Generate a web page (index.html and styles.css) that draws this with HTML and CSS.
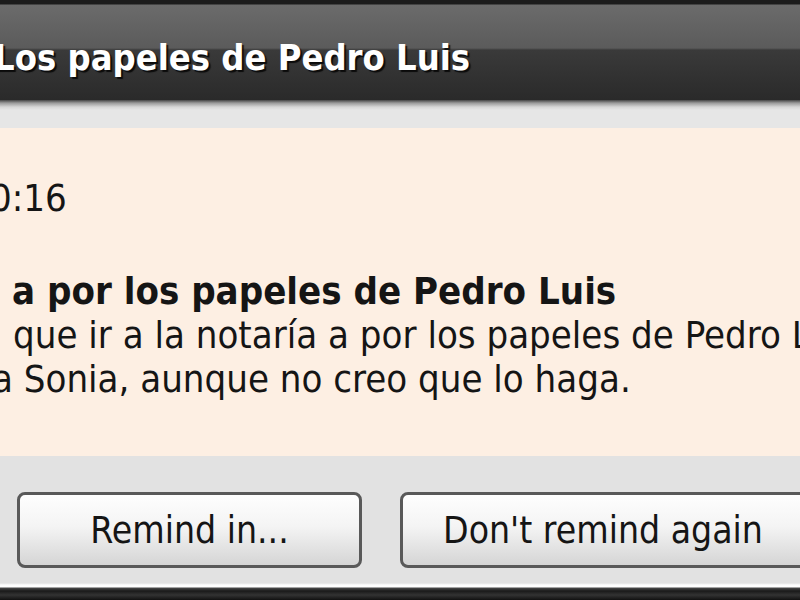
FILE: index.html
```html
<!DOCTYPE html>
<html lang="es">
<head>
  <meta charset="UTF-8">
  <title>Recordatorio</title>
  <link rel="stylesheet" href="styles.css">
</head>
<body>

  <!-- Window title -->
  <header class="titlebar">
    <h1 class="title">Los papeles de Pedro Luis</h1>
  </header>
  <div class="titlebar-edge"></div>

  <!-- Reminder details -->
  <main class="details">
    <p class="due">0:16</p>
    <p class="subject">a por los papeles de Pedro Luis</p>
    <p class="notes notes-first">que ir a la notaría a por los papeles de Pedro Luis</p>
    <p class="notes notes-second">a Sonia, aunque no creo que lo haga.</p>
  </main>

  <!-- Actions -->
  <footer class="actions">
    <button class="btn">Remind in...</button>
    <button class="btn btn-wide">Don't remind again</button>
  </footer>
  <div class="frame-bottom"></div>

</body>
</html>
```

FILE: styles.css
```css
/* Global */
body {
  margin: 0;
  width: 800px;
  height: 600px;
  overflow: hidden;
  font-family: "DejaVu Sans Condensed", "DejaVu Sans", sans-serif;
  color: #151515;
  background-color: #e2e2e2;
}

/* Title bar */
.titlebar {
  height: 100px;
  box-sizing: border-box;
  padding-top: 37px;
  overflow: hidden;
  background: linear-gradient(#1c1c1c 0, #1c1c1c 4px, #6b6b6b 5px, #5b5b5b 48px, #3a3a3a 50px, #2a2a2a 100%);
}
.title {
  margin: 0 0 0 -6px;
  font-size: 36px;
  line-height: 42px;
  font-weight: bold;
  color: #fff;
  white-space: nowrap;
  text-shadow: 2px 2px 1px rgba(0, 0, 0, 0.8);
}
.titlebar-edge {
  height: 28px;
  background: linear-gradient(#444 0, #9a9a9a 3px, #d6d6d6 7px, #e6e6e6 10px, #e6e6e6 100%);
}

/* Details */
.details {
  height: 328px;
  box-sizing: border-box;
  padding-top: 48px;
  overflow: hidden;
  background-color: #fdefe3;
  font-size: 38px;
  line-height: 44px;
}
.details p {
  margin: 0;
  white-space: nowrap;
}
.due {
  margin-left: -10px !important;
  margin-bottom: 49px !important;
}
.subject {
  margin-left: 12px !important;
  font-weight: bold;
}
.notes-first {
  margin-left: 13px !important;
}
.notes-second {
  margin-left: -8px !important;
}

/* Buttons */
.actions {
  display: flex;
  gap: 38px;
  height: 127px;
  box-sizing: border-box;
  padding: 36px 0 0 17px;
  overflow: hidden;
  background-color: #e2e2e2;
}
.btn {
  flex: none;
  width: 345px;
  height: 76px;
  border: 3px solid #595959;
  border-radius: 8px;
  background: linear-gradient(#fefefe 0%, #f4f4f4 45%, #d5d5d5 100%);
  font-family: inherit;
  font-size: 37px;
  color: #151515;
  padding: 0;
}
.btn-wide {
  width: 420px;
  text-align: left;
  padding-left: 40px;
}
.frame-bottom {
  height: 17px;
  background: linear-gradient(#e2e2e2 0, #fff 2px, #fff 4px, #4a4a4a 5px, #1a1a1a 8px, #333 12px, #111 100%);
}
```
